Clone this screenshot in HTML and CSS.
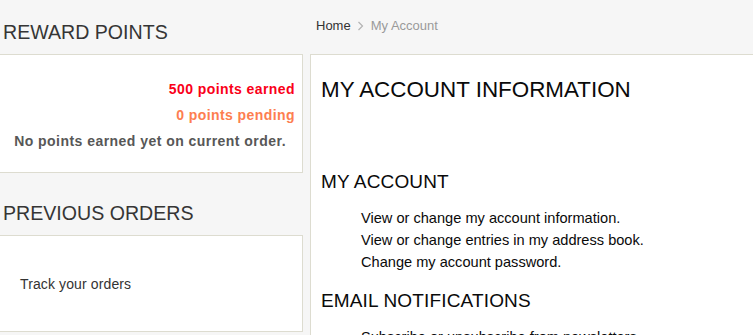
FILE: index.html
```html
<!DOCTYPE html>
<html lang="en">
<head>
<meta charset="utf-8">
<title>My Account</title>
<link rel="stylesheet" href="styles.css">
</head>
<body>
<div class="page">
  <aside class="sidebar">
    <h2 class="side-title side-title-first">REWARD POINTS</h2>
    <div class="box reward-box">
      <p class="earned">500 points earned</p>
      <p class="pending">0 points pending</p>
      <p class="none">No points earned yet on current order.</p>
    </div>
    <h2 class="side-title side-title-next">PREVIOUS ORDERS</h2>
    <div class="box orders-box">
      <p class="track">Track your orders</p>
    </div>
  </aside>
  <main class="main">
    <nav class="crumbs">
      <a class="crumb-home" href="#">Home</a>
      <svg class="crumb-sep" width="7" height="10" viewBox="0 0 7 10"><path d="M1.5 1 L5.5 5 L1.5 9" fill="none" stroke="#b3b3b3" stroke-width="1.2"/></svg>
      <span class="crumb-current">My Account</span>
    </nav>
    <section class="box account-box">
      <h1 class="page-title">MY ACCOUNT INFORMATION</h1>
      <h3 class="sec-title sec-first">MY ACCOUNT</h3>
      <ul class="links">
        <li>View or change my account information.</li>
        <li>View or change entries in my address book.</li>
        <li>Change my account password.</li>
      </ul>
      <h3 class="sec-title sec-next">EMAIL NOTIFICATIONS</h3>
      <ul class="links links-last">
        <li>Subscribe or unsubscribe from newsletters.</li>
      </ul>
    </section>
  </main>
</div>
</body>
</html>
```
FILE: styles.css
```css
html, body {
  margin: 0;
  padding: 0;
  background: #f6f6f6;
  font-family: "Liberation Sans", Arial, sans-serif;
  overflow: hidden;
}

.page {
  display: flex;
  align-items: flex-start;
  width: 753px;
}

.sidebar {
  flex: 0 0 304px;
  width: 304px;
  margin-left: -1px;
}

.side-title {
  margin: 0;
  padding-left: 4px;
  font-size: 19.6px;
  line-height: 24px;
  font-weight: normal;
  color: #353535;
}

.side-title-first {
  margin-top: 20px;
  margin-bottom: 10px;
}

.side-title-next {
  margin-top: 28px;
  margin-bottom: 10px;
}

.box {
  background: #fff;
  border: 1px solid #dddcd0;
  box-sizing: border-box;
}

.reward-box {
  padding: 24px 7px 21px 0;
  text-align: right;
}

.reward-box p {
  margin: 0;
  font-size: 14px;
  line-height: 20px;
  font-weight: bold;
  letter-spacing: 0.42px;
}

.reward-box .earned { color: #fa0019; }
.reward-box .pending { color: #fd7e50; margin-top: 6px; }
.reward-box .none { color: #575757; margin-top: 6px; margin-right: 9px; letter-spacing: 0.46px; }

.orders-box {
  padding: 38px 20px 37px 20px;
}

.track {
  margin: 0;
  font-size: 14px;
  line-height: 20px;
  letter-spacing: 0.12px;
  color: #333;
}

.main {
  flex: 1 1 auto;
  margin-left: 7px;
  margin-right: -20px;
}

.crumbs {
  display: flex;
  align-items: center;
  margin: 16px 0 18px 0;
  padding-left: 6px;
  height: 20px;
  font-size: 13px;
  line-height: 20px;
}

.crumb-home {
  color: #333;
  text-decoration: none;
}

.crumb-sep {
  margin: 0 7px 0 6px;
}

.crumb-current {
  color: #9a9a9a;
}

.account-box {
  padding: 21px 20px 0 10px;
  border-right: none;
  border-bottom: none;
  min-height: 300px;
}

.page-title {
  margin: 0;
  font-size: 22.4px;
  line-height: 28px;
  font-weight: normal;
  color: #0a0a0a;
}

.sec-title {
  margin: 0;
  font-size: 19px;
  line-height: 24px;
  font-weight: normal;
  letter-spacing: 0.15px;
  color: #0a0a0a;
}

.sec-first { margin-top: 66px; }
.sec-next { margin-top: 16px; }

.links {
  list-style: none;
  margin: 13px 0 0 0;
  padding-left: 40px;
}

.links li {
  font-size: 14.6px;
  line-height: 22px;
  color: #0a0a0a;
}
```
